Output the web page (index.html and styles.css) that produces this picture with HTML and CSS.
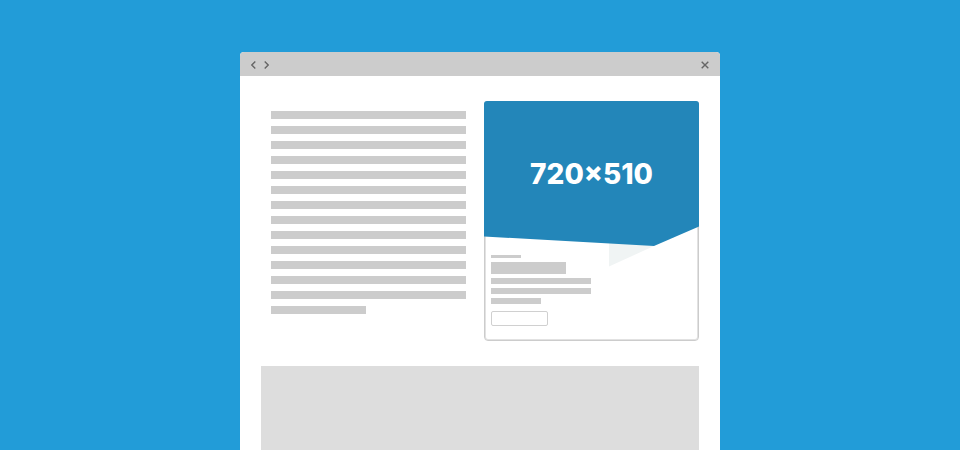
FILE: index.html
```html
<!DOCTYPE html>
<html lang="en">
<head>
<meta charset="utf-8">
<meta name="viewport" content="width=device-width, initial-scale=1">
<title>720×510</title>
<link rel="stylesheet" href="styles.css">
</head>
<body>
<div class="window">
  <header class="titlebar">
    <nav class="history">
      <button class="control" type="button" aria-label="Back"><svg width="5" height="8" viewBox="0 0 5 8"><path d="M4.300 .5 .8 4l3.500 3.500"/></svg></button>
      <button class="control" type="button" aria-label="Forward"><svg width="5" height="8" viewBox="0 0 5 8"><path d="M.7 .5 4.200 4 .7 7.500"/></svg></button>
    </nav>
    <button class="control" type="button" aria-label="Close"><svg width="8" height="8" viewBox="0 0 8 8"><path d="M.7 .7l6.600 6.600M7.300 .7.7 7.300"/></svg></button>
  </header>
  <main class="page">
    <div class="columns">
      <div class="article">
        <div class="line"></div><div class="line"></div><div class="line"></div><div class="line"></div><div class="line"></div>
        <div class="line"></div><div class="line"></div><div class="line"></div><div class="line"></div><div class="line"></div>
        <div class="line"></div><div class="line"></div><div class="line"></div><div class="line line-last"></div>
      </div>
      <section class="card">
        <div class="media">
          <svg class="shape" viewBox="0 0 215 145" preserveAspectRatio="none" aria-hidden="true">
            <path fill="#f0f4f4" d="M125 140v25.500L170 145z"/>
            <path fill="#2386b9" d="M0 3Q0 0 3 0H212Q215 0 215 3V125.500L170 145 0 135.500z"/>
          </svg>
          <span class="size">720×510</span>
        </div>
        <div class="details">
          <div class="bar bar-label"></div>
          <div class="bar bar-title"></div>
          <div class="bar bar-text"></div>
          <div class="bar bar-text"></div>
          <div class="bar bar-text bar-short"></div>
          <button class="action" type="button" aria-label="Open"></button>
        </div>
      </section>
    </div>
    <div class="panel"></div>
  </main>
</div>
</body>
</html>
```
FILE: styles.css
```css
* {
  box-sizing: border-box;
}

body {
  margin: 0;
  min-height: 100vh;
  display: flex;
  flex-direction: column;
  align-items: center;
  padding-top: 52px;
  background: #229cd8;
  font-family: Inter, sans-serif;
}

.window {
  width: 50%;
  flex: 1;
  display: flex;
  flex-direction: column;
  background: #fff;
  border-radius: 4px 4px 0 0;
  overflow: hidden;
}

.titlebar {
  display: flex;
  align-items: center;
  justify-content: space-between;
  height: 24px;
  padding: 1px 11px 0;
  background: #ccc;
}

.history {
  display: flex;
  gap: 8px;
}

.control {
  display: flex;
  padding: 0;
  border: 0;
  background: none;
}

.control path {
  fill: none;
  stroke: #666;
  stroke-width: 1.4;
}

.page {
  flex: 1;
  display: flex;
  flex-direction: column;
  gap: 25px;
  padding: 25px 21px 0;
}

.columns {
  display: grid;
  grid-template-columns: 205fr 215fr;
  gap: 18px;
}

.article {
  display: flex;
  flex-direction: column;
  gap: 7px;
  padding: 10px 0 0 10px;
}

.line {
  height: 8px;
  background: #ccc;
}

.line-last {
  width: 95px;
}

.card {
  border: 1px solid #ccc;
  border-radius: 4px;
  box-shadow: inset 0 0 0 1px #e2e2e2;
}

.media {
  display: grid;
  grid-template-rows: 145px;
  place-items: center;
  margin: -1px -1px 0;
}

.shape,
.size {
  grid-area: 1 / 1;
}

.shape {
  width: 100%;
  height: 100%;
  overflow: visible;
}

.size {
  color: #fff;
  font-size: 28px;
  font-weight: 800;
  line-height: 32px;
}

.details {
  padding: 9px 6px 14px;
}

.bar {
  background: #ccc;
  margin-bottom: 4px;
}

.bar-label {
  width: 30px;
  height: 3px;
}

.bar-title {
  width: 75px;
  height: 12px;
}

.bar-text {
  width: 100px;
  height: 6px;
}

.bar-short {
  width: 50px;
}

.action {
  display: block;
  width: 57px;
  height: 15px;
  margin-top: 7px;
  padding: 0;
  border: 1px solid #d0d0d0;
  border-radius: 2px;
  background: #fff;
}

.panel {
  flex: 1;
  background: #ddd;
}
```
